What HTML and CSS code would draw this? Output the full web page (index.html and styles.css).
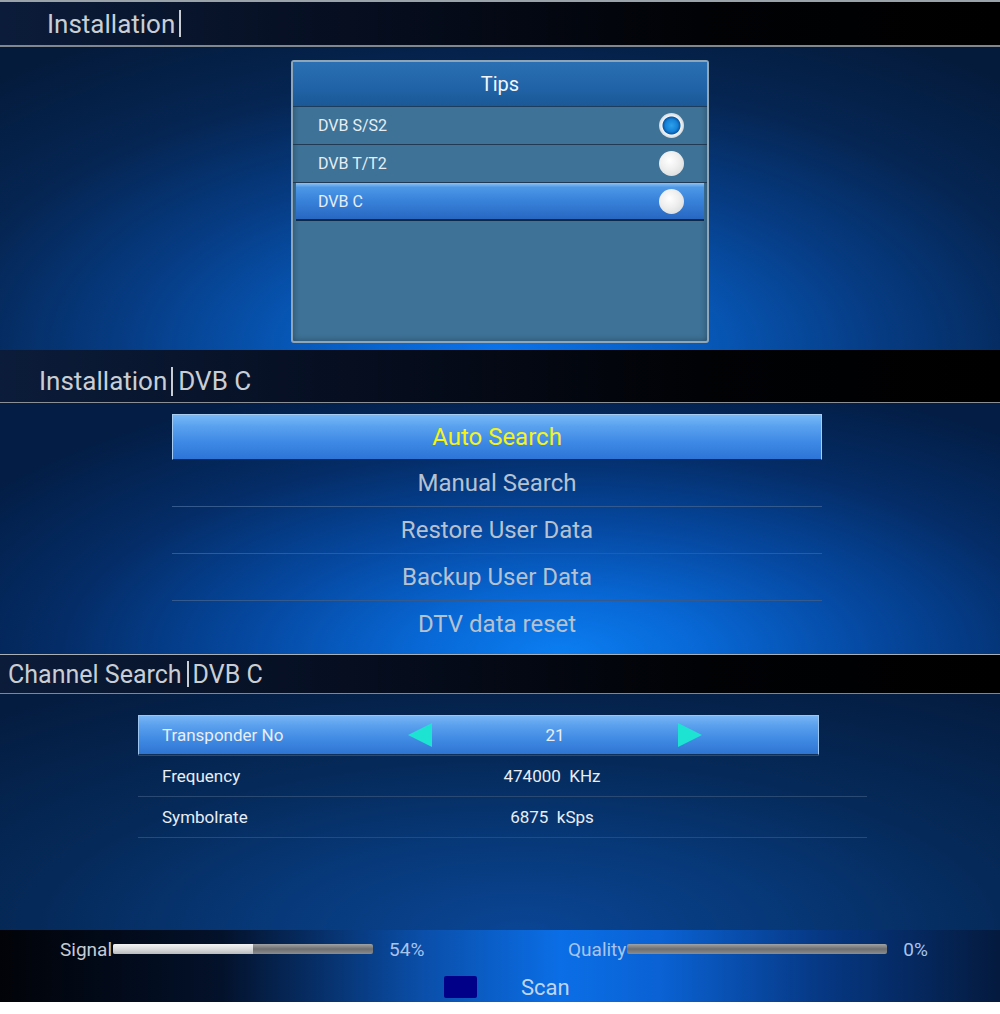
FILE: index.html
```html
<!DOCTYPE html>
<html>
<head>
  <link rel="stylesheet" href="styles.css">
</head>
<body>

  <!-- Source type picker -->
  <section class="screen install">
    <div class="title-bar">
      <span class="title">Installation</span><span class="caret"></span>
    </div>
    <div class="stage">
      <div class="dialog">
        <div class="dialog-title">Tips</div>
        <ul class="options">
          <li class="option"><span>DVB S/S2</span><span class="radio checked"></span></li>
          <li class="option"><span>DVB T/T2</span><span class="radio"></span></li>
          <li class="option focus"><span>DVB C</span><span class="radio"></span></li>
        </ul>
      </div>
    </div>
  </section>

  <!-- Cable installation menu -->
  <section class="screen menu-screen">
    <div class="title-bar">
      <span class="title">Installation</span><span class="caret"></span><span class="title">DVB C</span>
    </div>
    <div class="stage">
      <ul class="menu">
        <li class="menu-item focus">Auto Search</li>
        <li class="menu-item">Manual Search</li>
        <li class="menu-item">Restore User Data</li>
        <li class="menu-item">Backup User Data</li>
        <li class="menu-item last">DTV data reset</li>
      </ul>
    </div>
  </section>

  <!-- Channel search -->
  <section class="screen search">
    <div class="title-bar">
      <span class="title">Channel Search</span><span class="caret"></span><span class="title">DVB C</span>
    </div>
    <div class="stage">
      <ul class="params">
        <li class="param focus">
          <span class="param-name">Transponder No</span>
          <svg class="arrow" width="24" height="24" viewBox="0 0 24 24"><polygon points="24,0 24,24 0,12" fill="#1de3d3"/></svg>
          <span class="param-value">21</span>
          <svg class="arrow" width="24" height="24" viewBox="0 0 24 24"><polygon points="0,0 0,24 24,12" fill="#1de3d3"/></svg>
        </li>
        <li class="param">
          <span class="param-name">Frequency</span>
          <span class="param-value wide">474000&nbsp; KHz</span>
        </li>
        <li class="param">
          <span class="param-name">Symbolrate</span>
          <span class="param-value wide">6875&nbsp; kSps</span>
        </li>
      </ul>
    </div>
    <div class="status">
      <div class="meters">
        <div class="meter">
          <span class="meter-label">Signal</span>
          <div class="bar"><div class="bar-fill" style="width: 54%;"></div></div>
          <span class="meter-value">54%</span>
        </div>
        <div class="meter">
          <span class="meter-label quality">Quality</span>
          <div class="bar"><div class="bar-fill" style="width: 0%;"></div></div>
          <span class="meter-value">0%</span>
        </div>
      </div>
      <div class="hint">
        <span class="key"></span>
        <span class="hint-text">Scan</span>
      </div>
    </div>
  </section>

</body>
</html>
```

FILE: styles.css
```css
* {
  box-sizing: border-box;
}
body {
  margin: 0;
  width: 1000px;
  background-color: #fff;
  font-family: Roboto, "Liberation Sans", sans-serif;
}
ul {
  list-style: none;
  margin: 0;
  padding: 0;
}

/* shared header strip */
.title-bar {
  display: flex;
  align-items: center;
  background: linear-gradient(to right, #0b1c3a 0%, #060e20 35%, #010205 70%, #000 100%);
  color: #c9ced4;
  font-size: 26px;
}
.caret {
  width: 2px;
  background-color: #c9ced4;
}

/* installation: tips dialog */
.install .title-bar {
  height: 47px;
  padding-left: 47px;
  border-top: 2px solid #9aa2aa;
  border-bottom: 2px solid #80878e;
}
.install .caret {
  height: 27px;
  margin-left: 4px;
}
.install .stage {
  height: 303px;
  padding-top: 13px;
  background: radial-gradient(ellipse 75% 120% at 50% 100%, #0a72ea 0%, #075ec4 22%, #063c84 50%, #052552 75%, #041b3c 100%);
}
.dialog {
  width: 418px;
  height: 283px;
  margin: 0 auto;
  border: 2px solid #8fa6b8;
  border-radius: 3px;
  background-color: #3e7296;
  box-shadow: inset 0 0 6px rgba(0, 0, 0, 0.35);
}
.dialog-title {
  height: 45px;
  line-height: 45px;
  text-align: center;
  color: #f2f6fa;
  font-size: 20px;
  background: linear-gradient(#2b70b4, #2063a6 60%, #1b5896);
  border-bottom: 1px solid #1c3e5c;
}
.option {
  display: flex;
  align-items: center;
  justify-content: space-between;
  height: 38px;
  padding: 0 23px 0 25px;
  color: #e6eef4;
  font-size: 16px;
  border-bottom: 1px solid #1f3a52;
}
.option.focus {
  margin: 0 3px;
  padding: 0 20px 0 22px;
  background: linear-gradient(#8cc2f2 0%, #4d98e6 12%, #3a84dc 45%, #2767c2 100%);
  border-bottom: 2px solid #0e2848;
}
.radio {
  width: 25px;
  height: 25px;
  border-radius: 50%;
  background: radial-gradient(circle at 42% 38%, #ffffff 0%, #eeeeee 45%, #cfd2d4 100%);
}
.radio.checked {
  background: radial-gradient(circle, #2ea0ea 0, #1582d8 6px, #0a5aa8 8.5px, #f2f5f8 9.5px, #d0d6dc 12.5px);
}

/* installation: dvb-c menu */
.menu-screen .title-bar {
  height: 53px;
  padding: 10px 0 0 39px;
  border-bottom: 1px solid #8a9096;
}
.menu-screen .caret {
  height: 29px;
  margin: 0 5px 0 4px;
}
.menu-screen .stage {
  height: 251px;
  padding-top: 11px;
  background: radial-gradient(ellipse 70% 115% at 56% 100%, #0b7ef2 0%, #0868d6 20%, #0548a0 45%, #042c66 72%, #031d44 100%);
}
.menu {
  width: 650px;
  margin-left: 172px;
}
.menu-item {
  height: 47px;
  line-height: 46px;
  text-align: center;
  color: #b6c2d0;
  font-size: 24px;
  border-bottom: 1px solid #34598c;
}
.menu-item.last {
  border-bottom: none;
}
.menu-item.focus {
  height: 46px;
  line-height: 44px;
  color: #f6f21a;
  border: 1px solid #a8cdf2;
  border-bottom: 1px solid #0d2c56;
  background: linear-gradient(#78b8f6 0%, #5aa2f0 25%, #3f8ae6 60%, #2d74d6 100%);
}

/* channel search */
.search .title-bar {
  height: 40px;
  padding-left: 8px;
  border-top: 1px solid #aab0b6;
  border-bottom: 1px solid #80878e;
  font-size: 25px;
}
.search .caret {
  height: 26px;
  margin: 0 4px 0 5px;
}
.search .stage {
  height: 236px;
  padding-top: 21px;
  background: radial-gradient(ellipse 80% 120% at 52% 100%, #0a4594 0%, #07397a 30%, #052a5a 60%, #041c40 100%);
}
.params {
  width: 729px;
  margin-left: 138px;
}
.param {
  display: grid;
  grid-template-columns: 246px 24px 246px 24px;
  align-items: center;
  height: 41px;
  padding-left: 24px;
  color: #e8eef4;
  font-size: 17px;
  border-bottom: 1px solid #2a4a74;
}
.param.focus {
  width: 681px;
  height: 40px;
  margin-bottom: 1px;
  border: 1px solid #9cc6f0;
  border-bottom: 1px solid #123056;
  padding-left: 23px;
  background: linear-gradient(#78b6f4 0%, #5aa0ee 25%, #418be4 60%, #2e74d2 100%);
  box-shadow: 0 1px 0 #2a4a74;
}
.param-name {
  grid-column: 1;
}
.param-value {
  text-align: center;
}
.param-value.wide {
  grid-column: 2 / 5;
  padding-right: 6px;
}
.arrow {
  display: block;
}

/* signal / quality strip */
.status {
  height: 72px;
  background: linear-gradient(to right, #010308 0%, #03112a 22%, #0a4ea8 42%, #0b6ee6 56%, #0a62d4 66%, #063884 82%, #041a3e 100%);
}
.meters {
  display: flex;
  height: 38px;
  padding-left: 60px;
  align-items: center;
}
.meter {
  display: flex;
  flex-shrink: 0;
  align-items: center;
  width: 508px;
  font-size: 19px;
}
.meter:last-child {
  width: auto;
}
.meter-label {
  color: #c4ccd6;
}
.meter-label.quality {
  color: #a8c4ec;
}
.bar {
  width: 260px;
  height: 10px;
  margin-left: 1px;
  border-radius: 2px;
  background: linear-gradient(#a0a2a4, #6c6e70 50%, #8a8c8e);
  overflow: hidden;
}
.bar-fill {
  height: 100%;
  background: linear-gradient(#f4f4f4, #d4d6d8 60%, #b8babc);
}
.meter-value {
  margin-left: 16px;
  color: #a8c4ec;
}
.hint {
  display: flex;
  align-items: center;
  height: 34px;
  padding: 4px 0 0 444px;
}
.key {
  width: 33px;
  height: 22px;
  border-radius: 2px;
  background-color: #000088;
}
.hint-text {
  margin-left: 44px;
  color: #c0d4f0;
  font-size: 22px;
}
```
